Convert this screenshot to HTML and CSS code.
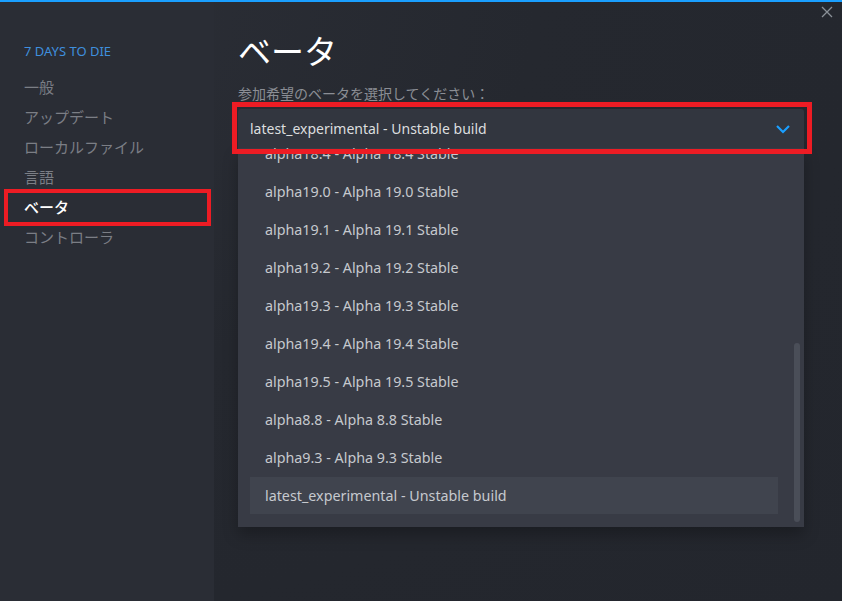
FILE: index.html
```html
<!DOCTYPE html>
<html lang="ja">

<head>
    <meta charset="UTF-8">
    <meta name="viewport" content="width=device-width, initial-scale=1.0">
    <title>ベータ</title>
    <link rel="stylesheet" href="styles.css">
</head>

<body>
    <div class="window">
        <aside class="sidebar">
            <div class="game-title">7 DAYS TO DIE</div>
            <nav class="nav">
                <div class="nav-item">一般</div>
                <div class="nav-item">アップデート</div>
                <div class="nav-item">ローカルファイル</div>
                <div class="nav-item">言語</div>
                <div class="nav-item active marked">ベータ</div>
                <div class="nav-item">コントローラ</div>
            </nav>
        </aside>

        <main class="content">
            <h1 class="heading">ベータ</h1>
            <p class="hint">参加希望のベータを選択してください：</p>

            <div class="dropdown marked">
                <span>latest_experimental - Unstable build</span>
                <svg class="chevron" width="16" height="10" viewBox="0 0 16 10">
                    <path d="M2 2 L8 8 L14 2" fill="none" stroke="#1a9fff" stroke-width="2.2" />
                </svg>
            </div>

            <div class="list">
                <div class="options">
                    <div class="option">alpha18.4 - Alpha 18.4 Stable</div>
                    <div class="option">alpha19.0 - Alpha 19.0 Stable</div>
                    <div class="option">alpha19.1 - Alpha 19.1 Stable</div>
                    <div class="option">alpha19.2 - Alpha 19.2 Stable</div>
                    <div class="option">alpha19.3 - Alpha 19.3 Stable</div>
                    <div class="option">alpha19.4 - Alpha 19.4 Stable</div>
                    <div class="option">alpha19.5 - Alpha 19.5 Stable</div>
                    <div class="option">alpha8.8 - Alpha 8.8 Stable</div>
                    <div class="option">alpha9.3 - Alpha 9.3 Stable</div>
                    <div class="option selected">latest_experimental - Unstable build</div>
                </div>
                <div class="scrollbar"></div>
            </div>
        </main>

        <button class="close" aria-label="close">
            <svg width="12" height="12" viewBox="0 0 12 12">
                <path d="M1 1 L11 11 M11 1 L1 11" stroke="#8a9097" stroke-width="1.3" />
            </svg>
        </button>
    </div>
</body>

</html>
```

FILE: styles.css
```css
body {
    margin: 0;
    background: #24272e;
    font-family: "Noto Sans", "Noto Sans CJK JP", sans-serif;
}

.window {
    position: relative;
    display: flex;
    width: 842px;
    height: 601px;
    overflow: hidden;
    border-top: 2px solid #1a9fff;
    box-sizing: border-box;
    background: radial-gradient(ellipse at 0 0, #2c2f37 0%, #25282f 45%, #23262d 100%);
}

.sidebar {
    width: 214px;
    flex-shrink: 0;
    padding-top: 39px;
    background: #2a2d35;
}

.game-title {
    padding-left: 24px;
    font-size: 13px;
    line-height: 20px;
    color: #3f8fde;
    margin-bottom: 11px;
}

.nav-item {
    position: relative;
    padding-left: 24px;
    font-family: "Noto Sans CJK JP", sans-serif;
    font-size: 15px;
    line-height: 30px;
    color: #7b7e85;
}

.nav-item.active {
    color: #ffffff;
    font-weight: 500;
}

.marked::after {
    content: "";
    position: absolute;
    border: 4px solid #ed1c24;
    pointer-events: none;
}

.nav-item.marked::after {
    top: -3px;
    bottom: -4px;
    left: 4px;
    right: 3px;
}

.content {
    flex: 1;
    padding: 28px 38px 0 24px;
}

.heading {
    margin: 0;
    font-family: "Noto Sans CJK JP", sans-serif;
    font-size: 33px;
    line-height: 40px;
    font-weight: 400;
    color: #ffffff;
}

.hint {
    margin: 13px 0 6px;
    font-family: "Noto Sans CJK JP", sans-serif;
    font-size: 14px;
    line-height: 20px;
    color: #8b8e95;
}

.dropdown {
    position: relative;
    z-index: 2;
    display: flex;
    align-items: center;
    justify-content: space-between;
    height: 39px;
    padding: 0 13px 0 12px;
    background: #32363f;
    border-radius: 3px 3px 0 0;
    font-size: 14px;
    color: #dcdedf;
}

.dropdown.marked::after {
    top: -7px;
    bottom: -6px;
    left: -6px;
    right: -8px;
    border-width: 5px;
}

.chevron {
    display: block;
}

.list {
    display: flex;
    height: 379px;
    padding: 0 4px 0 12px;
    overflow: hidden;
    background: #383b45;
    box-shadow: 0 8px 14px rgba(0, 0, 0, 0.25);
}

.options {
    flex: 1;
    margin-top: -13px;
    margin-right: 16px;
}

.option {
    height: 38px;
    line-height: 38px;
    padding-left: 15px;
    font-size: 14.3px;
    color: #c6c9ce;
}

.option.selected {
    height: 37px;
    line-height: 37px;
    background: #40444e;
}

.scrollbar {
    align-self: flex-end;
    width: 6px;
    height: 179px;
    margin-bottom: 5px;
    border-radius: 3px;
    background: #4a4e58;
}

.close {
    position: absolute;
    top: 4px;
    right: 9px;
    padding: 0;
    border: 0;
    background: none;
}

.close svg {
    display: block;
}
```
